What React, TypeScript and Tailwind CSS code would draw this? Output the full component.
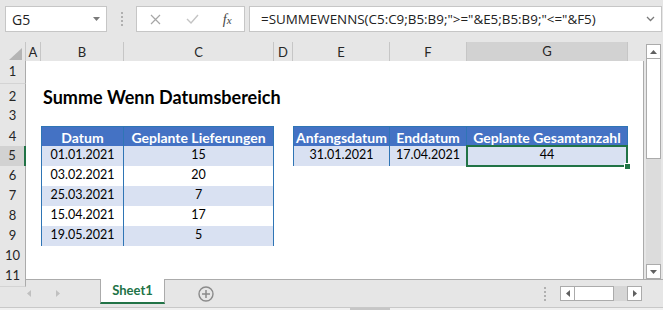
import React from "react";

// column widths: corner, A, B, C, D, E, F, G, rest
const COLS = "grid grid-cols-[26px_15px_83px_150px_19px_97px_77px_161px_15px]";

const th =
  "flex items-center justify-center whitespace-nowrap bg-[#4472c4] text-[14px] font-bold text-white border-y border-r border-[#2f75b5]";
const td = "flex items-center justify-center whitespace-nowrap text-[12.5px] border-b border-r border-[#2f75b5]";

function Row({
  n,
  h,
  active,
  children,
}: {
  n: number;
  h: string;
  active?: boolean;
  children?: React.ReactNode;
}) {
  return (
    <div className={`${COLS} ${h} bg-white`}>
      <div
        className={
          active
            ? "flex items-center justify-center border-b border-[#d4d4d4] border-r-2 border-r-[#217346] bg-[#d2d2d2] text-[#262626]"
            : "flex items-center justify-center border-b border-[#d4d4d4] border-r border-r-[#ababab] bg-[#e6e6e6] text-[#262626]"
        }
      >
        {n}
      </div>
      {children}
    </div>
  );
}

const DATA = [
  ["01.01.2021", "15"],
  ["03.02.2021", "20"],
  ["25.03.2021", "7"],
  ["15.04.2021", "17"],
  ["19.05.2021", "5"],
];

function Tri({ dir, color = "#606060" }: { dir: "up" | "down" | "left" | "right"; color?: string }) {
  const pts = {
    up: "0,4 7,4 3.5,0",
    down: "0,0 7,0 3.5,4",
    left: "4,0 4,7 0,3.5",
    right: "0,0 0,7 4,3.5",
  }[dir];
  const w = dir === "up" || dir === "down" ? 7 : 4;
  const h = dir === "up" || dir === "down" ? 4 : 7;
  return (
    <svg width={w} height={h} viewBox={`0 0 ${w} ${h}`}>
      <polygon points={pts} fill={color} />
    </svg>
  );
}

function Dots() {
  return (
    <div className="flex flex-col gap-[2px]">
      <span className="block h-[2px] w-[2px] bg-[#b0b0b0]" />
      <span className="block h-[2px] w-[2px] bg-[#b0b0b0]" />
      <span className="block h-[2px] w-[2px] bg-[#b0b0b0]" />
      <span className="block h-[2px] w-[2px] bg-[#b0b0b0]" />
    </div>
  );
}

export default function App() {
  const colHead =
    "flex items-center justify-center border-b border-r border-b-[#ababab] border-r-[#c6c6c6] bg-[#e6e6e6] text-[#262626]";

  return (
    <div className="h-[310px] w-[663px] overflow-hidden bg-[#e6e6e6] font-['Lato',sans-serif] text-[13px] text-black">
      {/* formula bar */}
      <div className="flex h-[42px] items-start pt-[6px] font-['Open_Sans',sans-serif] text-[13.4px] text-[#222]">
        <div className="ml-[5px] flex h-[26px] w-[102px] items-center justify-between border border-[#c6c6c6] bg-white pl-[6px] pr-[6px]">
          <span className="text-[14px]">G5</span>
          <Tri dir="down" color="#7a7a7a" />
        </div>
        <div className="ml-[14px] mt-[6px]">
          <Dots />
        </div>
        <div className="ml-[13px] flex h-[26px] w-[109px] items-center border border-[#c6c6c6] bg-white">
          <div className="flex w-[36px] justify-center pl-[2px]">
            <svg width="11" height="11" viewBox="0 0 11 11">
              <path d="M1 1 L10 10 M10 1 L1 10" stroke="#a6a6a6" strokeWidth="1.2" />
            </svg>
          </div>
          <div className="flex w-[36px] justify-center pl-[4px]">
            <svg width="13" height="10" viewBox="0 0 13 10">
              <path d="M1 5 L5 9 L12 1" stroke="#c4c4c4" strokeWidth="1.4" fill="none" />
            </svg>
          </div>
          <div className="flex w-[36px] justify-center pl-[2px] font-['Liberation_Serif',serif] text-[14px] italic text-[#444]">
            <span>f</span>
            <span className="mt-[3px] text-[11px]">x</span>
          </div>
        </div>
        <div className="ml-[4px] mr-[1px] flex h-[26px] flex-1 items-center justify-between border border-[#c6c6c6] bg-white pl-[11px] pr-[6px]">
          <span className="whitespace-nowrap">{'=SUMMEWENNS(C5:C9;B5:B9;">="&E5;B5:B9;"<="&F5)'}</span>
          <svg width="9" height="6" viewBox="0 0 9 6">
            <path d="M1 1 L4.5 4.5 L8 1" stroke="#7a7a7a" strokeWidth="1.3" fill="none" />
          </svg>
        </div>
      </div>

      {/* sheet + vertical scrollbar */}
      <div className="flex">
        <div className="flex w-[644px] flex-col">
          <div className={`${COLS} h-[19px]`}>
            <div className="flex items-end justify-end border-b border-r border-b-[#ababab] border-r-[#c6c6c6] bg-[#e6e6e6] pb-[3px] pr-[3px]">
              <svg width="13" height="12" viewBox="0 0 13 12">
                <polygon points="13,0 13,12 0,12" fill="#b4b4b4" />
              </svg>
            </div>
            <div className={colHead}>A</div>
            <div className={colHead}>B</div>
            <div className={colHead}>C</div>
            <div className={colHead}>D</div>
            <div className={colHead}>E</div>
            <div className={colHead}>F</div>
            <div className="flex items-center justify-center border-b-2 border-r border-b-[#217346] border-r-[#c6c6c6] bg-[#d2d2d2] text-[#262626]">
              G
            </div>
            <div className="border-b border-[#ababab] bg-[#e6e6e6]" />
          </div>

          <div className="flex flex-col border-r border-[#ababab]">
            <Row n={1} h="h-[23px]" />
            <Row n={2} h="h-[22px]">
              <div className="col-span-4 col-start-3 flex items-center whitespace-nowrap pl-[2px] text-[18px] font-bold">
                Summe Wenn Datumsbereich
              </div>
            </Row>
            <Row n={3} h="h-[20px]" />
            <Row n={4} h="h-[20px]">
              <div className={`col-start-3 border-l ${th}`}>Datum</div>
              <div className={th}>Geplante Lieferungen</div>
              <div className={`col-start-6 border-l ${th}`}>Anfangsdatum</div>
              <div className={th}>Enddatum</div>
              <div className={th}>Geplante Gesamtanzahl</div>
            </Row>
            {DATA.map(([d, v], i) => {
              const bg = i % 2 === 0 ? "bg-[#d9e1f2]" : "bg-white";
              return (
                <Row key={d} n={5 + i} h="h-[20px]" active={i === 0}>
                  <div className={`col-start-3 border-l ${td} ${bg}`}>{d}</div>
                  <div className={`${td} ${bg}`}>{v}</div>
                  {i === 0 && (
                    <>
                      <div className={`col-start-6 border-l ${td} ${bg}`}>31.01.2021</div>
                      <div className={`${td} ${bg}`}>17.04.2021</div>
                      <div className={`relative ${td} ${bg}`}>
                        44
                        <div className="absolute -bottom-[1px] -left-[1px] -right-[1px] -top-[1px] border-2 border-[#217346]" />
                        <div className="absolute -bottom-[4px] -right-[4px] h-[7px] w-[7px] border border-white bg-[#217346]" />
                      </div>
                    </>
                  )}
                </Row>
              );
            })}
            <Row n={10} h="h-[20px]" />
            <Row n={11} h="h-[13px]" />
          </div>
        </div>

        <div className="ml-[2px] flex h-[237px] w-[15px] flex-col pt-[2px]">
          <div className="flex h-[15px] items-center justify-center border border-[#ababab] bg-white">
            <Tri dir="up" />
          </div>
          <div className="h-[100px] border-x border-b border-[#ababab] bg-white" />
          <div className="flex-1 bg-[#dcdcdc]" />
          <div className="flex h-[15px] items-center justify-center border border-[#ababab] bg-white">
            <Tri dir="down" />
          </div>
        </div>
      </div>

      {/* sheet tabs */}
      <div className="flex h-[28px] items-start border-t border-[#ababab]">
        <div className="flex h-[27px] w-[100px] items-center">
          <div className="ml-[27px]">
            <Tri dir="left" color="#c0c0c0" />
          </div>
          <div className="ml-[25px]">
            <Tri dir="right" color="#c0c0c0" />
          </div>
        </div>
        <div className="-mt-px flex h-[25px] w-[65px] items-center justify-center border-x border-b-2 border-x-[#ababab] border-b-[#217346] bg-white text-[13px] font-bold text-[#217346]">
          Sheet1
        </div>
        <div className="ml-[33px] flex h-[27px] items-center">
          <svg width="16" height="16" viewBox="0 0 16 16">
            <circle cx="8" cy="8" r="7" stroke="#8a8a8a" strokeWidth="1.4" fill="none" />
            <path d="M8 4 V12 M4 8 H12" stroke="#8a8a8a" strokeWidth="1.5" />
          </svg>
        </div>
        <div className="flex-1" />
        <div className="flex h-[27px] items-center">
          <Dots />
        </div>
        <div className="ml-[14px] mt-[6px] flex h-[15px]">
          <div className="flex w-[15px] items-center justify-center border border-[#ababab] bg-white">
            <Tri dir="left" />
          </div>
          <div className="w-[39px] border-y border-r border-[#ababab] bg-white" />
          <div className="w-[13px] bg-[#d6d6d6]" />
          <div className="flex w-[15px] items-center justify-center border border-[#ababab] bg-white">
            <Tri dir="right" />
          </div>
        </div>
        <div className="w-[21px]" />
      </div>
      <div className="flex h-[3px] border-t border-[#c8c8c8] bg-[#f0f0f0]">
        <div className="ml-[350px] w-[40px] bg-[#c6c6c6]" />
      </div>
    </div>
  );
}
